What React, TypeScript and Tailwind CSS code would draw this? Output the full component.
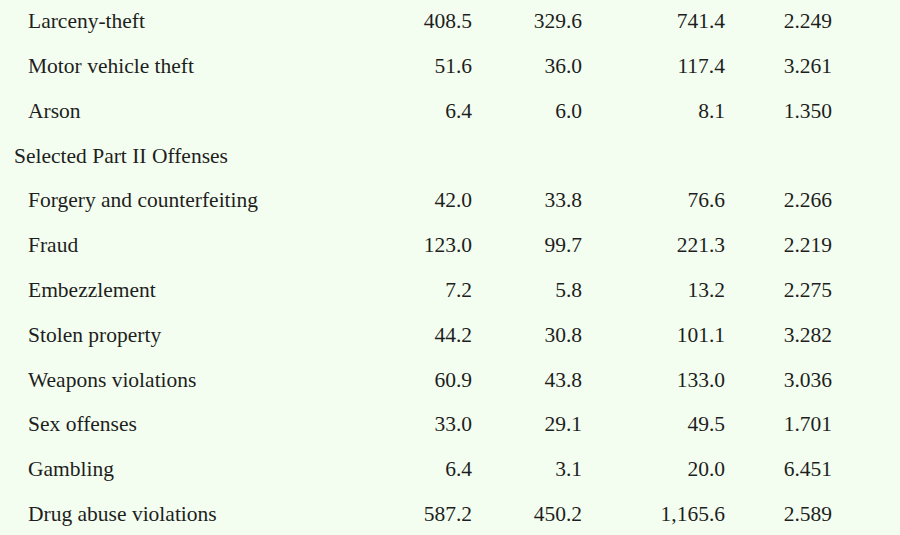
import React from 'react'

type Row = { label: string; section?: boolean; values?: string[] }

const rows: Row[] = [
  { label: 'Larceny-theft', values: ['408.5', '329.6', '741.4', '2.249'] },
  { label: 'Motor vehicle theft', values: ['51.6', '36.0', '117.4', '3.261'] },
  { label: 'Arson', values: ['6.4', '6.0', '8.1', '1.350'] },
  { label: 'Selected Part II Offenses', section: true },
  { label: 'Forgery and counterfeiting', values: ['42.0', '33.8', '76.6', '2.266'] },
  { label: 'Fraud', values: ['123.0', '99.7', '221.3', '2.219'] },
  { label: 'Embezzlement', values: ['7.2', '5.8', '13.2', '2.275'] },
  { label: 'Stolen property', values: ['44.2', '30.8', '101.1', '3.282'] },
  { label: 'Weapons violations', values: ['60.9', '43.8', '133.0', '3.036'] },
  { label: 'Sex offenses', values: ['33.0', '29.1', '49.5', '1.701'] },
  { label: 'Gambling', values: ['6.4', '3.1', '20.0', '6.451'] },
  { label: 'Drug abuse violations', values: ['587.2', '450.2', '1,165.6', '2.589'] },
]

const App = () => {
  return (
    <main className="w-[900px] h-[535px] overflow-hidden bg-[#f4fef0] text-[#1e1e1e] font-['Liberation_Serif',serif] text-[21.5px]">
      <div className="-mt-[1px]">
        {rows.map((row) => (
          <div
            key={row.label}
            className="grid grid-cols-[380px_92px_110px_143px_107px] h-[44.8px] items-center"
          >
            {row.section ? (
              <div className="col-span-5 pl-[14px]">{row.label}</div>
            ) : (
              <>
                <div className="pl-[28px]">{row.label}</div>
                {row.values!.map((v, i) => (
                  <div key={i} className="text-right">{v}</div>
                ))}
              </>
            )}
          </div>
        ))}
      </div>
    </main>
  )
}

export default App
